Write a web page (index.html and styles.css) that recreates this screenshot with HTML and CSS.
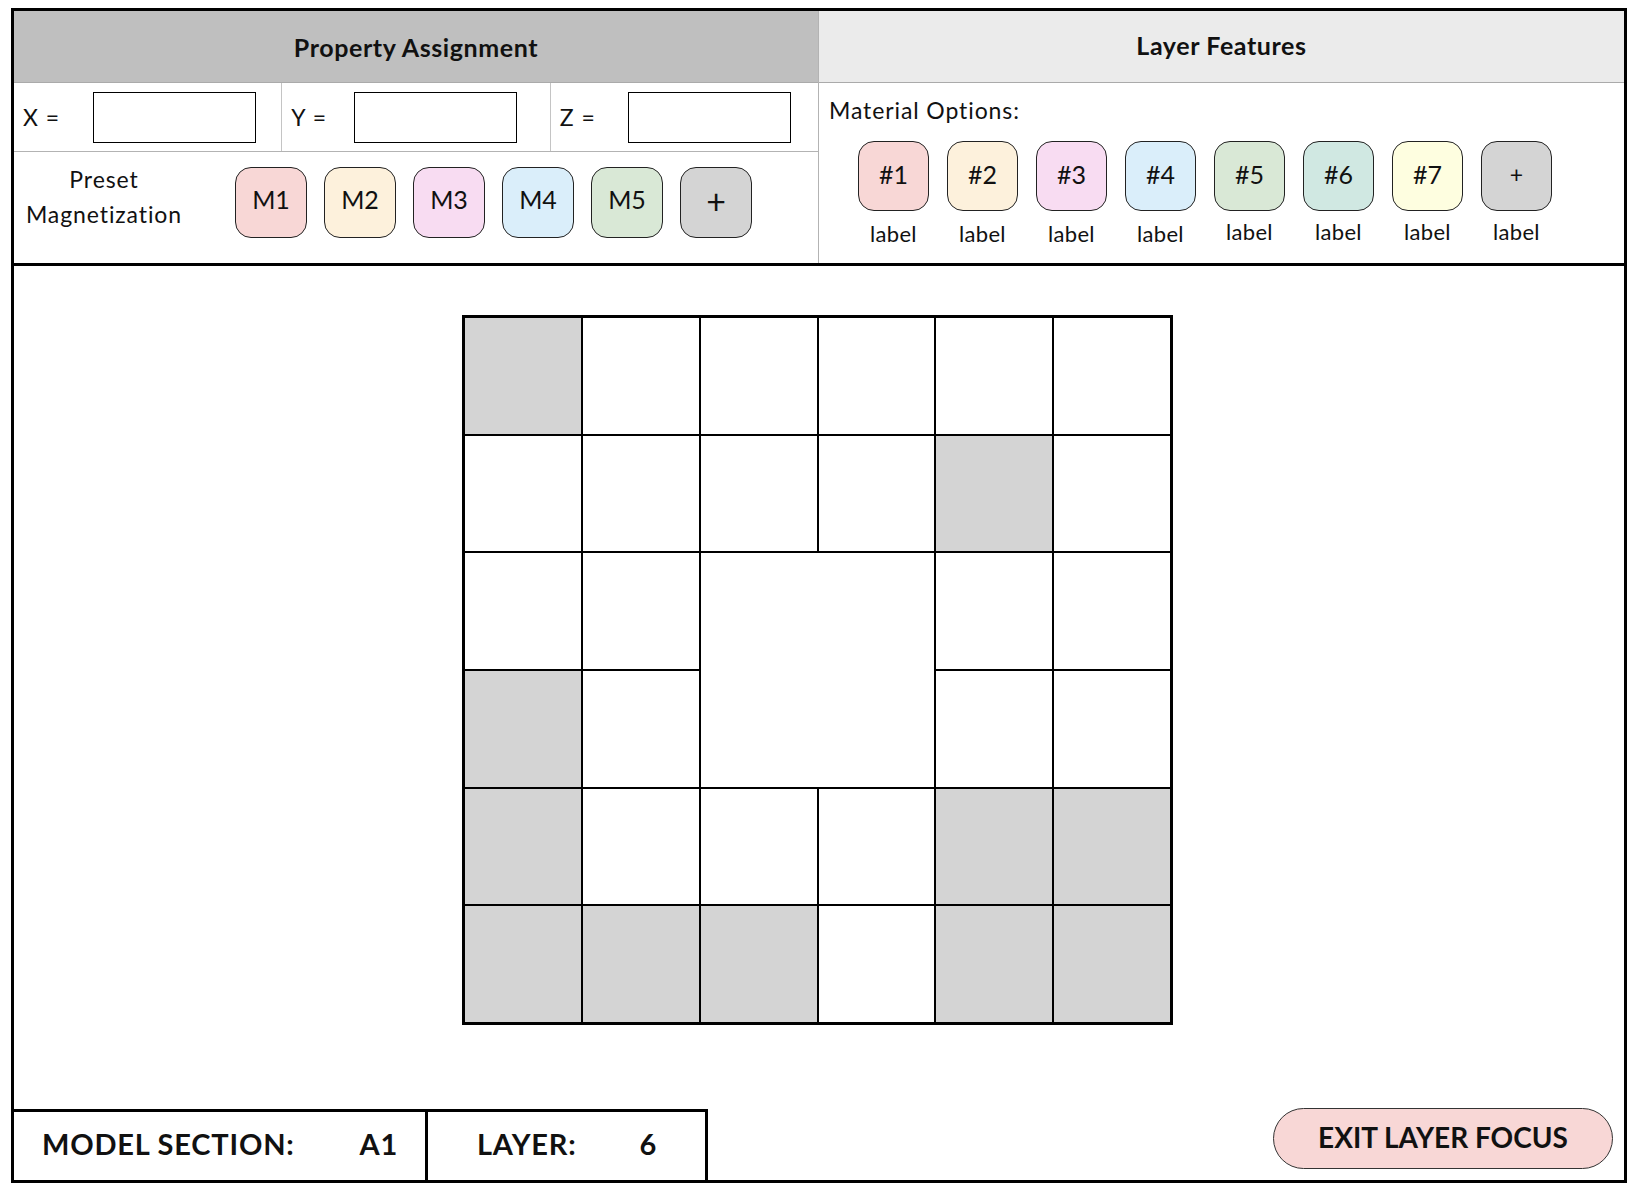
FILE: index.html
```html
<!DOCTYPE html>
<html lang="en">
<head>
<meta charset="utf-8">
<title>Layer Focus</title>
<link rel="stylesheet" href="styles.css">
</head>
<body>
<div class="frame">
  <div class="top">
    <section class="panel panel-left">
      <div class="title title-dark">Property Assignment</div>
      <div class="coords">
        <div class="coord coord-x"><span class="coord-label">X =</span><div class="field"></div></div>
        <div class="coord coord-y"><span class="coord-label">Y =</span><div class="field"></div></div>
        <div class="coord coord-z"><span class="coord-label">Z =</span><div class="field"></div></div>
      </div>
      <div class="preset">
        <div class="preset-label">Preset<br>Magnetization</div>
        <div class="mbtns">
          <div class="mbtn c-red">M1</div>
          <div class="mbtn c-orange">M2</div>
          <div class="mbtn c-pink">M3</div>
          <div class="mbtn c-blue">M4</div>
          <div class="mbtn c-green">M5</div>
          <div class="mbtn c-gray mbtn-plus">+</div>
        </div>
      </div>
    </section>
    <section class="panel panel-right">
      <div class="title title-light">Layer Features</div>
      <div class="materials">
        <div class="mat-title">Material Options:</div>
        <div class="mat-list">
          <div class="mat"><div class="chip c-red">#1</div><div class="mat-label">label</div></div>
          <div class="mat"><div class="chip c-orange">#2</div><div class="mat-label">label</div></div>
          <div class="mat"><div class="chip c-pink">#3</div><div class="mat-label">label</div></div>
          <div class="mat"><div class="chip c-blue">#4</div><div class="mat-label">label</div></div>
          <div class="mat"><div class="chip c-green">#5</div><div class="mat-label up">label</div></div>
          <div class="mat"><div class="chip c-teal">#6</div><div class="mat-label up">label</div></div>
          <div class="mat"><div class="chip c-yellow">#7</div><div class="mat-label up">label</div></div>
          <div class="mat"><div class="chip c-gray chip-plus">+</div><div class="mat-label up">label</div></div>
        </div>
      </div>
    </section>
  </div>

  <main class="canvas">
    <div class="grid">
      <div class="cell fill"></div><div class="cell"></div><div class="cell"></div><div class="cell"></div><div class="cell"></div><div class="cell"></div>
      <div class="cell"></div><div class="cell"></div><div class="cell"></div><div class="cell"></div><div class="cell fill"></div><div class="cell"></div>
      <div class="cell"></div><div class="cell"></div><div class="cell merged"></div><div class="cell"></div><div class="cell"></div>
      <div class="cell fill"></div><div class="cell"></div><div class="cell"></div><div class="cell"></div>
      <div class="cell fill"></div><div class="cell"></div><div class="cell"></div><div class="cell"></div><div class="cell fill"></div><div class="cell fill"></div>
      <div class="cell fill"></div><div class="cell fill"></div><div class="cell fill"></div><div class="cell"></div><div class="cell fill"></div><div class="cell fill"></div>
    </div>
  </main>

  <footer class="footer">
    <div class="info">
      <div class="info-box box-section"><span>MODEL SECTION:</span><span>A1</span></div>
      <div class="info-box box-layer"><span>LAYER:</span><span>6</span></div>
    </div>
    <button class="exit">EXIT LAYER FOCUS</button>
  </footer>
</div>
</body>
</html>
```

FILE: styles.css
```css
* { box-sizing: border-box; }

html, body {
  margin: 0;
  padding: 0;
  background: #fff;
}

body {
  font-family: Lato, "Noto Sans", "Liberation Sans", sans-serif;
  color: #111;
}

.frame {
  width: 1616px;
  height: 1175px;
  margin: 8px 0 0 11px;
  border: 3px solid #000;
  display: flex;
  flex-direction: column;
}

/* ---------- top panels ---------- */
.top {
  display: flex;
  height: 255px;
  border-bottom: 3px solid #000;
  flex-shrink: 0;
}

.panel-left {
  width: 805px;
  border-right: 1px solid #b3b3b3;
  display: flex;
  flex-direction: column;
}

.panel-right {
  flex: 1;
  display: flex;
  flex-direction: column;
}

.title {
  height: 72px;
  border-bottom: 1px solid #aaa;
  display: flex;
  align-items: center;
  justify-content: center;
  font-weight: 700;
  font-size: 25px;
  letter-spacing: 0.6px;
  color: #111;
  flex-shrink: 0;
}

.title-dark { background: #bfbfbf; }
.title-light { background: #ebebeb; padding-bottom: 4px; }

.coords {
  display: flex;
  height: 69px;
  border-bottom: 1px solid #b3b3b3;
}

.coord {
  flex: 1;
  display: flex;
  align-items: center;
  padding-left: 9px;
  border-right: 1px solid #c4c4c4;
  font-size: 23px;
  letter-spacing: 1px;
}

.coord:last-child { border-right: none; }

.coord-label {
  width: 70px;
  flex-shrink: 0;
}

.coord-y .coord-label { width: 63px; }
.coord-z .coord-label { width: 68px; }

.field {
  width: 163px;
  height: 51px;
  border: 1px solid #000;
  background: #fff;
  margin-top: 1px;
}

.preset {
  flex: 1;
  display: flex;
  align-items: flex-start;
}

.preset-label {
  width: 180px;
  margin-top: 10px;
  text-align: center;
  font-size: 23px;
  letter-spacing: 0.9px;
  line-height: 35px;
}

.mbtns {
  display: flex;
  gap: 17px;
  margin-left: 41px;
  margin-top: 15px;
}

.mbtn {
  width: 72px;
  height: 71px;
  border: 1px solid #222;
  border-radius: 16px;
  display: flex;
  align-items: center;
  justify-content: center;
  font-size: 25px;
  padding-bottom: 7px;
}

.mbtn-plus { font-size: 34px; padding-bottom: 5px; }

.c-red { background: #f8d7d6; }
.c-orange { background: #fdf1dc; }
.c-pink { background: #f8dcf2; }
.c-blue { background: #daeefa; }
.c-green { background: #d9e8d6; }
.c-teal { background: #d0e8e2; }
.c-yellow { background: #fefee0; }
.c-gray { background: #d4d4d4; }

.materials {
  padding: 13px 0 0 10px;
}

.mat-title {
  font-size: 23px;
  letter-spacing: 0.9px;
  line-height: 28px;
}

.mat-list {
  display: flex;
  gap: 18px;
  margin-top: 17px;
  padding-left: 29px;
}

.mat {
  width: 71px;
  display: flex;
  flex-direction: column;
  align-items: center;
}

.chip {
  width: 71px;
  height: 70px;
  border: 1px solid #222;
  border-radius: 16px;
  display: flex;
  align-items: center;
  justify-content: center;
  font-size: 25px;
  padding-bottom: 5px;
}

.chip-plus { font-size: 23px; }

.mat-label {
  margin-top: 10px;
  font-size: 22px;
  letter-spacing: 0.3px;
  line-height: 26px;
}

.mat-label.up { margin-top: 8px; }

/* ---------- canvas ---------- */
.canvas {
  flex: 1;
  display: flex;
  justify-content: center;
  align-items: flex-start;
  padding-top: 49px;
  padding-right: 3px;
}

.grid {
  width: 711px;
  height: 710px;
  border: 3px solid #000;
  background: #000;
  display: grid;
  grid-template-columns: repeat(6, 1fr);
  grid-template-rows: repeat(6, 1fr);
  gap: 2px;
}

.cell { background: #fff; }
.cell.fill { background: #d4d4d4; }
.cell.merged {
  grid-column: span 2;
  grid-row: span 2;
}

/* ---------- footer ---------- */
.footer {
  display: flex;
  justify-content: space-between;
  align-items: flex-end;
  height: 71px;
  flex-shrink: 0;
}

.info {
  display: flex;
  margin-left: -3px;
  margin-bottom: -3px;
}

.info-box {
  height: 74px;
  border: 3px solid #000;
  display: flex;
  align-items: center;
  justify-content: space-between;
  font-weight: 700;
  font-size: 29px;
  letter-spacing: 0.8px;
  color: #111;
  padding-bottom: 6px;
  background: #fff;
}

.box-section {
  width: 417px;
  padding-left: 28px;
  padding-right: 27px;
}

.box-layer {
  width: 280px;
  border-left: none;
  padding-left: 49px;
  padding-right: 48px;
}

.exit {
  width: 340px;
  height: 61px;
  margin: 0 11px 11px 0;
  border: 1px solid #333;
  border-radius: 31px;
  background: #f8d7d6;
  font-family: Lato, "Noto Sans", "Liberation Sans", sans-serif;
  font-weight: 700;
  font-size: 28px;
  color: #111;
  padding: 0 0 4px 0;
  cursor: pointer;
}
```
